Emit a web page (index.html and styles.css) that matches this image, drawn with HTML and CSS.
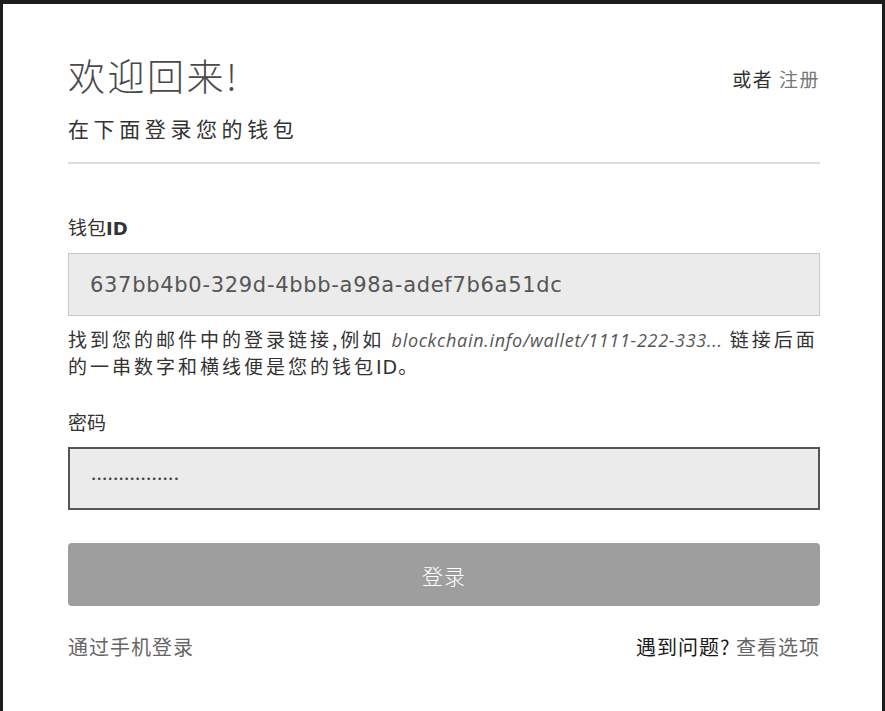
FILE: index.html
```html
<!DOCTYPE html>
<html lang="zh-CN">
<head>
<meta charset="utf-8">
<title>登录</title>
<link rel="stylesheet" href="styles.css">
</head>
<body>
<div class="frame">
  <div class="panel">
    <header class="head">
      <div class="head-text">
        <h1 class="title">欢迎回来!</h1>
        <p class="subtitle">在下面登录您的钱包</p>
      </div>
      <div class="alt">或者 <a class="alt-link">注册</a></div>
    </header>
    <hr class="rule">
    <form class="form">
      <label class="label">钱包<span class="latin-bold">ID</span></label>
      <div class="field">637bb4b0-329d-4bbb-a98a-adef7b6a51dc</div>
      <p class="help">找到您的邮件中的登录链接,例如 <em class="url">blockchain.info/wallet/1111-222-333...</em> 链接后面的一串数字和横线便是您的钱包<span class="latin">ID</span>。</p>
      <label class="label label-pw">密码</label>
      <div class="field field-active"><span class="dots">••••••••••••••••</span></div>
      <button type="button" class="submit">登录</button>
    </form>
    <footer class="foot">
      <a class="muted">通过手机登录</a>
      <span class="trouble"><span class="dark">遇到问题?</span> <a class="muted">查看选项</a></span>
    </footer>
  </div>
</div>
</body>
</html>
```
FILE: styles.css
```css
html, body {
  margin: 0;
  padding: 0;
  background: #ffffff;
}
body {
  font-family: "Noto Sans CJK SC", "Open Sans", sans-serif;
  color: #333;
}
.frame {
  box-sizing: border-box;
  height: 711px;
  border-top: 4px solid #1c1c1c;
  border-left: 3px solid #1c1c1c;
  border-right: 3px solid #1c1c1c;
  background: #fff;
}
.panel {
  padding: 51px 62px 0 65px;
}
.head {
  display: flex;
  justify-content: space-between;
  align-items: flex-start;
}
.title {
  margin: 0;
  font-size: 37px;
  line-height: 40px;
  font-weight: 300;
  letter-spacing: 2.5px;
  color: #4a4a4a;
}
.subtitle {
  margin: 18px 0 0;
  font-size: 21px;
  line-height: 30px;
  letter-spacing: 4.6px;
  color: #333;
}
.alt {
  margin-top: 11px;
  font-size: 19px;
  line-height: 26px;
  letter-spacing: 1.5px;
  color: #333;
}
.alt-link {
  color: #777;
}
.rule {
  margin: 19px 0 0;
  border: 0;
  height: 2px;
  background: #dcdcdc;
}
.form {
  display: flex;
  flex-direction: column;
}
.label {
  margin-top: 50px;
  font-size: 19px;
  line-height: 26px;
  color: #333;
}
.latin-bold {
  font-family: "DejaVu Sans", sans-serif;
  font-weight: 600;
  font-size: 18px;
}
.label-pw {
  margin-top: 29px;
}
.field {
  box-sizing: border-box;
  margin-top: 11px;
  height: 63px;
  padding: 0 21px;
  display: flex;
  align-items: center;
  background: #ebebeb;
  border: 1px solid #c8c8c8;
  font-family: "DejaVu Sans", sans-serif;
  font-size: 21px;
  letter-spacing: 0.7px;
  color: #555;
}
.field-active {
  border: 2px solid #555;
  margin-top: 12px;
}
.dots {
  font-size: 9px;
  letter-spacing: 0.2px;
  color: #444;
}
.help {
  margin: 10px 0 0;
  font-size: 19px;
  line-height: 26px;
  letter-spacing: 3px;
  color: #333;
}
.latin {
  font-family: "DejaVu Sans", sans-serif;
  letter-spacing: 1px;
}
.url {
  font-family: "Open Sans", sans-serif;
  font-size: 18px;
  letter-spacing: 0.7px;
  color: #555;
}
.submit {
  margin-top: 33px;
  height: 63px;
  border: 0;
  border-radius: 4px;
  background: #9e9e9e;
  color: #fff;
  font-family: "Noto Sans CJK SC", sans-serif;
  font-size: 21px;
  font-weight: 300;
  letter-spacing: 1px;
}
.foot {
  margin-top: 27px;
  display: flex;
  justify-content: space-between;
  font-size: 20px;
  line-height: 28px;
  letter-spacing: 1px;
}
.muted {
  color: #666;
}
.dark {
  color: #1a1a1a;
}
```
